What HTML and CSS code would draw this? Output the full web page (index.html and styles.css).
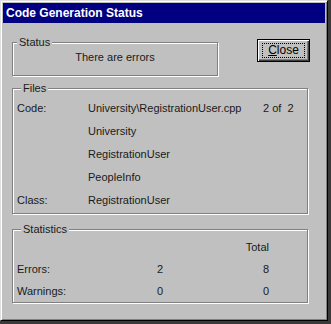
FILE: index.html
```html
<!DOCTYPE html>
<html>
<head>
<meta charset="utf-8">
<link rel="stylesheet" href="styles.css">
</head>
<body>
<div class="window">
  <div class="titlebar">Code Generation Status</div>
  <div class="content">
    <div class="top-row">
      <fieldset class="group status">
        <legend>Status</legend>
        <div class="status-text">There are errors</div>
      </fieldset>
      <button class="btn"><span class="focus"><u>C</u>lose</span></button>
    </div>
    <fieldset class="group files">
      <legend>Files</legend>
      <div class="files-grid">
        <span>Code:</span><span>University\RegistrationUser.cpp</span><span>2 of&nbsp; 2</span>
        <span></span><span>University</span><span></span>
        <span></span><span>RegistrationUser</span><span></span>
        <span></span><span>PeopleInfo</span><span></span>
        <span>Class:</span><span>RegistrationUser</span><span></span>
      </div>
    </fieldset>
    <fieldset class="group stats">
      <legend>Statistics</legend>
      <div class="stats-grid">
        <span></span><span></span><span class="num">Total</span>
        <span>Errors:</span><span class="mid">2</span><span class="num">8</span>
        <span>Warnings:</span><span class="mid">0</span><span class="num">0</span>
      </div>
    </fieldset>
  </div>
</div>
</body>
</html>
```

FILE: styles.css
```css
html, body {
  margin: 0;
  padding: 0;
}
body {
  width: 331px;
  height: 324px;
  background: #3a3a3a;
  font-family: "Liberation Sans", Arial, sans-serif;
  font-size: 11px;
  color: #1a1a1a;
  overflow: hidden;
}
.window {
  box-sizing: border-box;
  width: 328px;
  height: 321px;
  background: #c0c0c0;
  border-top: 1px solid #dfdfdf;
  border-left: 1px solid #dfdfdf;
  border-right: 1px solid #000;
  border-bottom: 1px solid #000;
  box-shadow: inset 1px 1px 0 #fff, inset -1px -1px 0 #808080;
  padding: 2px;
}
.titlebar {
  height: 20px;
  background: #000080;
  color: #fff;
  font-weight: bold;
  font-size: 12px;
  line-height: 20px;
  padding-left: 3px;
}
.content {
  padding: 13px 17px 0 9px;
}
.top-row {
  display: flex;
  justify-content: space-between;
  align-items: flex-start;
}
.group {
  margin: 0;
  border: 1px solid #808080;
  box-shadow: inset 1px 1px 0 #fff, 1px 1px 0 #fff;
  padding: 0 0 0 4px;
  min-width: 0;
}
.group legend {
  margin-left: 4px;
  padding: 0 2px;
  background: #c0c0c0;
  line-height: 13px;
}
.status {
  width: 206px;
  height: 40px;
  box-sizing: border-box;
  padding: 0;
}
.status-text {
  text-align: center;
  line-height: 14px;
  padding-top: 1px;
}
.btn {
  margin-top: 3px;
  margin-right: -2px;
  width: 53px;
  height: 23px;
  padding: 0;
  background: #c0c0c0;
  border: 1px solid #000;
  box-shadow: inset 1px 1px 0 #fff, inset -1px -1px 0 #404040, inset -2px -2px 0 #808080;
  font-family: "Liberation Sans", Arial, sans-serif;
  font-size: 12px;
  color: #000;
  display: flex;
  align-items: center;
  justify-content: center;
}
.btn .focus {
  display: block;
  width: 41px;
  height: 13px;
  line-height: 13px;
  border: 1px dotted #000;
  text-align: center;
}
.files {
  margin-top: 6px;
  height: 132px;
  box-sizing: border-box;
}
.files-grid {
  display: grid;
  grid-template-columns: 71px 175px auto;
  grid-auto-rows: 23px;
  align-items: center;
  margin-top: 1px;
}
.stats {
  margin-top: 9px;
  height: 80px;
  box-sizing: border-box;
  padding-right: 38px;
}
.stats-grid {
  display: grid;
  grid-template-columns: 130px 26px 1fr;
  grid-template-rows: 23px 22px 22px;
  align-items: center;
  margin-top: -1px;
}
.mid {
  text-align: center;
}
.num {
  text-align: right;
}
```
